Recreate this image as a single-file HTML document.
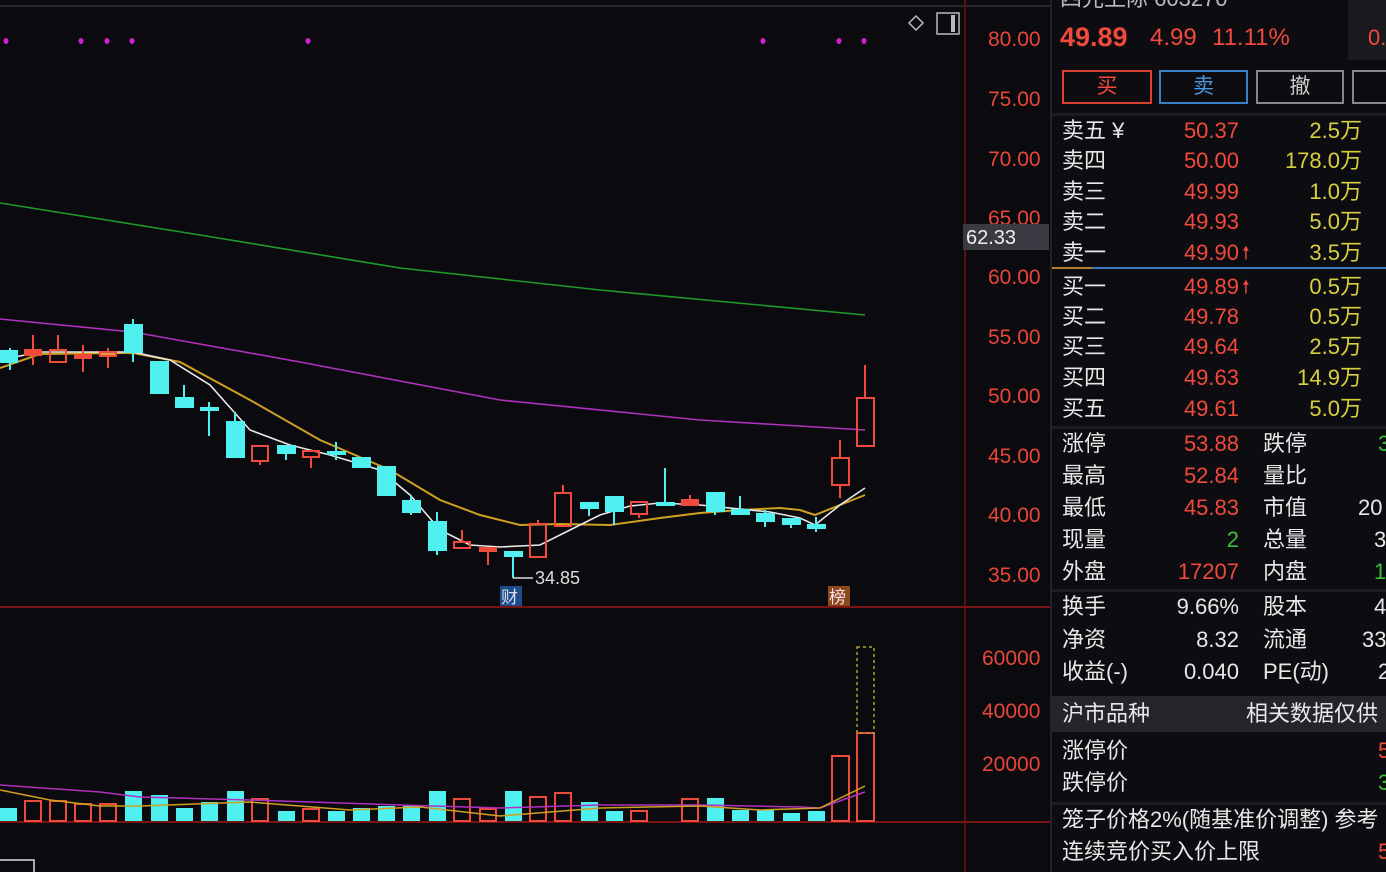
<!DOCTYPE html>
<html><head><meta charset="utf-8"><style>
*{margin:0;padding:0;box-sizing:border-box}
body{width:1386px;height:872px;background:#0b0a0e;overflow:hidden;position:relative;font-family:"Liberation Sans","Noto Sans CJK SC",sans-serif}
svg{position:absolute;left:0;top:0}
.p{position:absolute;left:1050px;top:0;width:336px;height:872px;background:#0d0c10;border-left:2px solid #222}
.t{position:absolute;font-size:22px;line-height:26px;white-space:nowrap}
.w{color:#e8e8e8}.r{color:#f04a3c}.y{color:#d8d040}.g{color:#3cc03c}
.ra{text-align:right}
.btn{position:absolute;top:70px;height:34px;border:2px solid;font-size:21px;text-align:center;line-height:30px}
.sep{position:absolute;left:0;width:336px;height:3px;background:#1c1c22}
</style></head><body>
<svg width="1050" height="872" viewBox="0 0 1050 872">
<line x1="0" y1="6" x2="1050" y2="6" stroke="#2a2a30" stroke-width="2"/>
<g fill="#d020d0"><ellipse cx="6" cy="41" rx="2.5" ry="3"/><ellipse cx="81" cy="41" rx="2.5" ry="3"/><ellipse cx="107" cy="41" rx="2.5" ry="3"/><ellipse cx="132" cy="41" rx="2.5" ry="3"/><ellipse cx="308" cy="41" rx="2.5" ry="3"/><ellipse cx="763" cy="41" rx="2.5" ry="3"/><ellipse cx="839" cy="41" rx="2.5" ry="3"/><ellipse cx="864" cy="41" rx="2.5" ry="3"/></g>
<path d="M909 23l7-7 7 7-7 7z" fill="none" stroke="#bbb" stroke-width="1.5"/>
<rect x="937" y="13" width="22" height="21" fill="none" stroke="#bbb" stroke-width="1.5"/><rect x="951" y="15" width="4" height="17" fill="#bbb"/>
<line x1="965" y1="0" x2="965" y2="872" stroke="#5a1010" stroke-width="2"/>
<line x1="0" y1="607" x2="1050" y2="607" stroke="#7a1414" stroke-width="2"/>
<line x1="0" y1="822" x2="1050" y2="822" stroke="#7a1414" stroke-width="2"/>
<g fill="#e8463a" font-size="21" font-family="Liberation Sans">
<text x="988" y="46">80.00</text><text x="988" y="106">75.00</text><text x="988" y="166">70.00</text><text x="988" y="225">65.00</text><text x="988" y="284">60.00</text><text x="988" y="344">55.00</text><text x="988" y="403">50.00</text><text x="988" y="463">45.00</text><text x="988" y="522">40.00</text><text x="988" y="582">35.00</text>
<text x="982" y="665">60000</text><text x="982" y="718">40000</text><text x="982" y="771">20000</text>
</g>
<rect x="963" y="224" width="86" height="26" fill="#3a3a42"/>
<text x="966" y="244" fill="#eee" font-size="20" font-family="Liberation Sans">62.33</text>
<g fill="none" stroke-width="1.6">
<polyline stroke="#1f9a2a" points="0,203 200,235 400,268 600,290 865,315"/>
<polyline stroke="#b030c0" points="0,319 133,332 300,362 500,400 700,420 865,430"/>
<polyline stroke="#d0a020" stroke-width="2" points="0,368 40,354 133,353 180,362 250,400 320,440 390,470 440,500 480,515 520,525 560,524 610,525 660,518 700,513 740,510 780,508 800,510 815,515 840,505 865,495"/>
<polyline stroke="#e8e8e8" points="0,360 40,352 133,352 170,360 210,385 250,430 290,445 330,455 380,470 410,495 440,530 470,545 500,547 540,545 570,530 600,515 630,506 660,503 700,505 720,507 770,512 800,518 815,525 840,505 865,488"/>
</g>
<g stroke="#4ef0f0" fill="#4ef0f0" stroke-width="2">
<line x1="10" y1="348" x2="10" y2="370"/><rect x="1" y="351" width="16" height="11"/>
<line x1="133" y1="319" x2="133" y2="362"/><rect x="125" y="325" width="17" height="27"/>
<rect x="151" y="362" width="17" height="31"/>
<line x1="184" y1="385" x2="184" y2="408"/><rect x="176" y="398" width="17" height="9"/>
<line x1="209" y1="402" x2="209" y2="436"/><rect x="201" y="408" width="17" height="2"/>
<line x1="235" y1="412" x2="235" y2="458"/><rect x="227" y="422" width="17" height="35"/>
<line x1="286" y1="446" x2="286" y2="460"/><rect x="278" y="446" width="17" height="7"/>
<line x1="336" y1="442" x2="336" y2="460"/><rect x="328" y="452" width="17" height="2"/>
<rect x="353" y="458" width="17" height="9"/>
<rect x="378" y="467" width="17" height="28"/>
<line x1="411" y1="495" x2="411" y2="515"/><rect x="403" y="501" width="17" height="11"/>
<line x1="437" y1="512" x2="437" y2="555"/><rect x="429" y="522" width="17" height="28"/>
<line x1="513" y1="552" x2="513" y2="578"/><rect x="505" y="552" width="17" height="4"/>
<line x1="589" y1="502" x2="589" y2="516"/><rect x="581" y="503" width="17" height="5"/>
<line x1="614" y1="497" x2="614" y2="525"/><rect x="606" y="497" width="17" height="14"/>
<line x1="665" y1="468" x2="665" y2="506"/><rect x="657" y="503" width="17" height="2"/>
<line x1="715" y1="493" x2="715" y2="515"/><rect x="707" y="493" width="17" height="18"/>
<line x1="740" y1="496" x2="740" y2="515"/><rect x="732" y="510" width="17" height="4"/>
<line x1="765" y1="510" x2="765" y2="527"/><rect x="757" y="514" width="17" height="7"/>
<line x1="791" y1="519" x2="791" y2="528"/><rect x="783" y="519" width="17" height="5"/>
<line x1="816" y1="517" x2="816" y2="532"/><rect x="808" y="525" width="17" height="3"/>
</g>
<g stroke="#f04a3c" fill="none" stroke-width="2">
<line x1="33" y1="335" x2="33" y2="365"/><rect x="25" y="350" width="16" height="5" fill="#f04a3c"/>
<line x1="58" y1="335" x2="58" y2="350"/><rect x="50" y="350" width="16" height="12"/>
<line x1="83" y1="345" x2="83" y2="372"/><rect x="75" y="355" width="16" height="3" fill="#f04a3c"/>
<line x1="108" y1="348" x2="108" y2="368"/><rect x="100" y="352" width="16" height="4" fill="#e0a040"/>
<line x1="260" y1="461" x2="260" y2="465"/><rect x="252" y="446" width="16" height="15"/>
<line x1="311" y1="457" x2="311" y2="468"/><rect x="303" y="451" width="16" height="6"/>
<line x1="462" y1="530" x2="462" y2="542"/><rect x="454" y="542" width="16" height="6"/>
<line x1="488" y1="551" x2="488" y2="565"/><rect x="480" y="548" width="16" height="3" fill="#f04a3c"/>
<line x1="538" y1="520" x2="538" y2="524"/><rect x="530" y="524" width="16" height="33"/>
<line x1="563" y1="485" x2="563" y2="493"/><rect x="555" y="493" width="16" height="33"/>
<line x1="639" y1="514" x2="639" y2="518"/><rect x="631" y="502" width="16" height="12"/>
<line x1="690" y1="495" x2="690" y2="500"/><rect x="682" y="500" width="16" height="5" fill="#f04a3c"/>
<line x1="840" y1="440" x2="840" y2="458"/><line x1="840" y1="485" x2="840" y2="498"/><rect x="832" y="458" width="17" height="27"/>
<line x1="865" y1="365" x2="865" y2="398"/><rect x="857" y="398" width="17" height="48"/>
</g>
<path d="M513 578h20" stroke="#ddd" stroke-width="1.5"/>
<text x="535" y="584" fill="#ddd" font-size="18" font-family="Liberation Sans">34.85</text>
<rect x="500" y="586" width="22" height="20" fill="#1d4c8a"/><text x="501" y="603" fill="#dde" font-size="17" font-family="Noto Sans CJK SC">财</text>
<rect x="828" y="586" width="22" height="20" fill="#8a4a1a"/><text x="829" y="603" fill="#fde" font-size="17" font-family="Noto Sans CJK SC">榜</text>
<!-- volume -->
<g fill="#4ef0f0">
<rect x="0" y="808" width="17" height="13"/><rect x="125" y="791" width="17" height="30"/><rect x="151" y="795" width="17" height="26"/><rect x="176" y="808" width="17" height="13"/><rect x="201" y="802" width="17" height="19"/><rect x="227" y="791" width="17" height="30"/><rect x="278" y="811" width="17" height="10"/><rect x="328" y="811" width="17" height="10"/><rect x="353" y="808" width="17" height="13"/><rect x="378" y="806" width="17" height="15"/><rect x="403" y="806" width="17" height="15"/><rect x="429" y="791" width="17" height="30"/><rect x="505" y="791" width="17" height="30"/><rect x="581" y="802" width="17" height="19"/><rect x="606" y="811" width="17" height="10"/><rect x="707" y="798" width="17" height="23"/><rect x="732" y="810" width="17" height="11"/><rect x="757" y="810" width="17" height="11"/><rect x="783" y="813" width="17" height="8"/><rect x="808" y="811" width="17" height="10"/>
</g>
<g fill="none" stroke="#f04a3c" stroke-width="2">
<rect x="25" y="801" width="16" height="20"/><rect x="50" y="801" width="16" height="20"/><rect x="75" y="804" width="16" height="17"/><rect x="100" y="804" width="16" height="17"/><rect x="252" y="799" width="16" height="22"/><rect x="303" y="809" width="16" height="12"/><rect x="454" y="799" width="16" height="22"/><rect x="480" y="809" width="16" height="12"/><rect x="530" y="797" width="16" height="24"/><rect x="555" y="793" width="16" height="28"/><rect x="631" y="811" width="16" height="10"/><rect x="682" y="799" width="16" height="22"/><rect x="832" y="756" width="17" height="65"/><rect x="857" y="733" width="17" height="88"/>
</g>
<rect x="857" y="647" width="17" height="86" fill="none" stroke="#b0a030" stroke-width="1.5" stroke-dasharray="3,3"/>
<g fill="none" stroke-width="1.5">
<polyline stroke="#b030c0" points="0,785 100,792 140,797 250,800 400,805 500,808 600,805 700,805 800,807 820,808 865,792"/>
<polyline stroke="#d0a020" points="0,790 50,800 100,806 140,806 250,802 350,810 420,807 500,816 600,808 700,806 760,810 820,808 865,786"/>
</g>
<path d="M0 860h34v12" fill="none" stroke="#ddd" stroke-width="1.5"/>
</svg>
<div class="p">
<div class="t" style="left:8px;top:-14px;color:#bbb;font-size:22px">四光上际 603270</div>
<div style="position:absolute;left:296px;top:0;width:40px;height:60px;background:#1a1a1f"></div>
<div class="t r" style="left:8px;top:24px;font-size:27px;font-weight:bold">49.89</div>
<div class="t r" style="left:98px;top:25px;font-size:24px">4.99</div>
<div class="t r" style="left:160px;top:25px;font-size:24px">11.11%</div>
<div class="t r" style="left:316px;top:25px;font-size:22px">0.</div>
<div class="btn" style="left:10px;width:90px;border-color:#d84030;color:#f04a3c">买</div>
<div class="btn" style="left:107px;width:89px;border-color:#3a80c8;color:#4a9ae0">卖</div>
<div class="btn" style="left:204px;width:88px;border-color:#888;color:#ccc">撤</div>
<div class="btn" style="left:300px;width:40px;border-color:#888"></div>
<div class="sep" style="top:113px"></div>
<div class="t w" style="left:10px;top:118px">卖五 ¥</div><div class="t r ra" style="left:100px;width:87px;top:118px">50.37</div><div class="t y ra" style="left:200px;width:110px;top:118px">2.5万</div>
<div class="t w" style="left:10px;top:148px">卖四</div><div class="t r ra" style="left:100px;width:87px;top:148px">50.00</div><div class="t y ra" style="left:200px;width:110px;top:148px">178.0万</div>
<div class="t w" style="left:10px;top:179px">卖三</div><div class="t r ra" style="left:100px;width:87px;top:179px">49.99</div><div class="t y ra" style="left:200px;width:110px;top:179px">1.0万</div>
<div class="t w" style="left:10px;top:209px">卖二</div><div class="t r ra" style="left:100px;width:87px;top:209px">49.93</div><div class="t y ra" style="left:200px;width:110px;top:209px">5.0万</div>
<div class="t w" style="left:10px;top:240px">卖一</div><div class="t r ra" style="left:100px;width:87px;top:240px">49.90</div><div class="t r" style="left:190px;top:240px;font-size:18px">🠕</div><div class="t y ra" style="left:200px;width:110px;top:240px">3.5万</div>
<div style="position:absolute;left:0;top:267px;width:336px;height:2px;background:#3a78b8"></div><div style="position:absolute;left:0;top:267px;width:40px;height:2px;background:#b08030"></div>
<div class="t w" style="left:10px;top:274px">买一</div><div class="t r ra" style="left:100px;width:87px;top:274px">49.89</div><div class="t r" style="left:190px;top:274px;font-size:18px">🠕</div><div class="t y ra" style="left:200px;width:110px;top:274px">0.5万</div>
<div class="t w" style="left:10px;top:304px">买二</div><div class="t r ra" style="left:100px;width:87px;top:304px">49.78</div><div class="t y ra" style="left:200px;width:110px;top:304px">0.5万</div>
<div class="t w" style="left:10px;top:334px">买三</div><div class="t r ra" style="left:100px;width:87px;top:334px">49.64</div><div class="t y ra" style="left:200px;width:110px;top:334px">2.5万</div>
<div class="t w" style="left:10px;top:365px">买四</div><div class="t r ra" style="left:100px;width:87px;top:365px">49.63</div><div class="t y ra" style="left:200px;width:110px;top:365px">14.9万</div>
<div class="t w" style="left:10px;top:396px">买五</div><div class="t r ra" style="left:100px;width:87px;top:396px">49.61</div><div class="t y ra" style="left:200px;width:110px;top:396px">5.0万</div>
<div class="sep" style="top:426px"></div>
<div class="t w" style="left:10px;top:431px">涨停</div><div class="t r ra" style="left:100px;width:87px;top:431px">53.88</div><div class="t w" style="left:211px;top:431px">跌停</div><div class="t g" style="left:326px;top:431px">3</div>
<div class="t w" style="left:10px;top:463px">最高</div><div class="t r ra" style="left:100px;width:87px;top:463px">52.84</div><div class="t w" style="left:211px;top:463px">量比</div>
<div class="t w" style="left:10px;top:495px">最低</div><div class="t r ra" style="left:100px;width:87px;top:495px">45.83</div><div class="t w" style="left:211px;top:495px">市值</div><div class="t w" style="left:306px;top:495px">20</div>
<div class="t w" style="left:10px;top:527px">现量</div><div class="t g ra" style="left:100px;width:87px;top:527px">2</div><div class="t w" style="left:211px;top:527px">总量</div><div class="t w" style="left:322px;top:527px">3</div>
<div class="t w" style="left:10px;top:559px">外盘</div><div class="t r ra" style="left:100px;width:87px;top:559px">17207</div><div class="t w" style="left:211px;top:559px">内盘</div><div class="t g" style="left:322px;top:559px">1</div>
<div class="sep" style="top:589px"></div>
<div class="t w" style="left:10px;top:594px">换手</div><div class="t w ra" style="left:100px;width:87px;top:594px">9.66%</div><div class="t w" style="left:211px;top:594px">股本</div><div class="t w" style="left:322px;top:594px">4</div>
<div class="t w" style="left:10px;top:627px">净资</div><div class="t w ra" style="left:100px;width:87px;top:627px">8.32</div><div class="t w" style="left:211px;top:627px">流通</div><div class="t w" style="left:310px;top:627px">33</div>
<div class="t w" style="left:10px;top:659px">收益(-)</div><div class="t w ra" style="left:100px;width:87px;top:659px">0.040</div><div class="t w" style="left:211px;top:659px">PE(动)</div><div class="t w" style="left:326px;top:659px">2</div>
<div style="position:absolute;left:0;top:696px;width:336px;height:36px;background:#24242a"></div>
<div class="t w" style="left:10px;top:701px">沪市品种</div><div class="t w" style="left:194px;top:701px">相关数据仅供</div>
<div class="t w" style="left:10px;top:738px">涨停价</div><div class="t r" style="left:326px;top:738px">5</div>
<div class="t w" style="left:10px;top:770px">跌停价</div><div class="t g" style="left:326px;top:770px">3</div>
<div class="sep" style="top:802px"></div>
<div class="t w" style="left:10px;top:807px">笼子价格2%(随基准价调整) 参考</div>
<div class="t w" style="left:10px;top:839px">连续竞价买入价上限</div><div class="t r" style="left:326px;top:839px">5</div>
</div>
</body></html>
